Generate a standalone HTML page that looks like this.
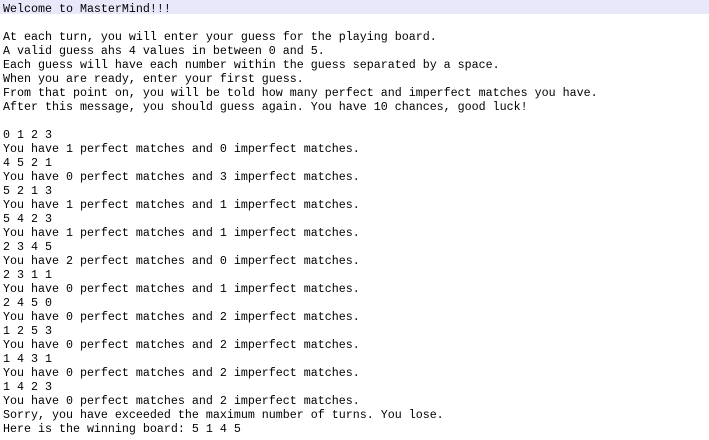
<!DOCTYPE html>
<html><head><style>
html,body{margin:0;padding:0;width:709px;height:440px;overflow:hidden}
body{background:linear-gradient(#e8e8fa 0,#e8e8fa 14px,#fff 14px,#fff 100%)}
pre{margin:0;padding:2px 0 0 3px;font-family:"Liberation Mono",monospace;font-size:11.67px;line-height:14px;color:#000}
</style></head><body><pre>Welcome to MasterMind!!!

At each turn, you will enter your guess for the playing board.
A valid guess ahs 4 values in between 0 and 5.
Each guess will have each number within the guess separated by a space.
When you are ready, enter your first guess.
From that point on, you will be told how many perfect and imperfect matches you have.
After this message, you should guess again. You have 10 chances, good luck!

0 1 2 3
You have 1 perfect matches and 0 imperfect matches.
4 5 2 1
You have 0 perfect matches and 3 imperfect matches.
5 2 1 3
You have 1 perfect matches and 1 imperfect matches.
5 4 2 3
You have 1 perfect matches and 1 imperfect matches.
2 3 4 5
You have 2 perfect matches and 0 imperfect matches.
2 3 1 1
You have 0 perfect matches and 1 imperfect matches.
2 4 5 0
You have 0 perfect matches and 2 imperfect matches.
1 2 5 3
You have 0 perfect matches and 2 imperfect matches.
1 4 3 1
You have 0 perfect matches and 2 imperfect matches.
1 4 2 3
You have 0 perfect matches and 2 imperfect matches.
Sorry, you have exceeded the maximum number of turns. You lose.
Here is the winning board: 5 1 4 5</pre></body></html>
